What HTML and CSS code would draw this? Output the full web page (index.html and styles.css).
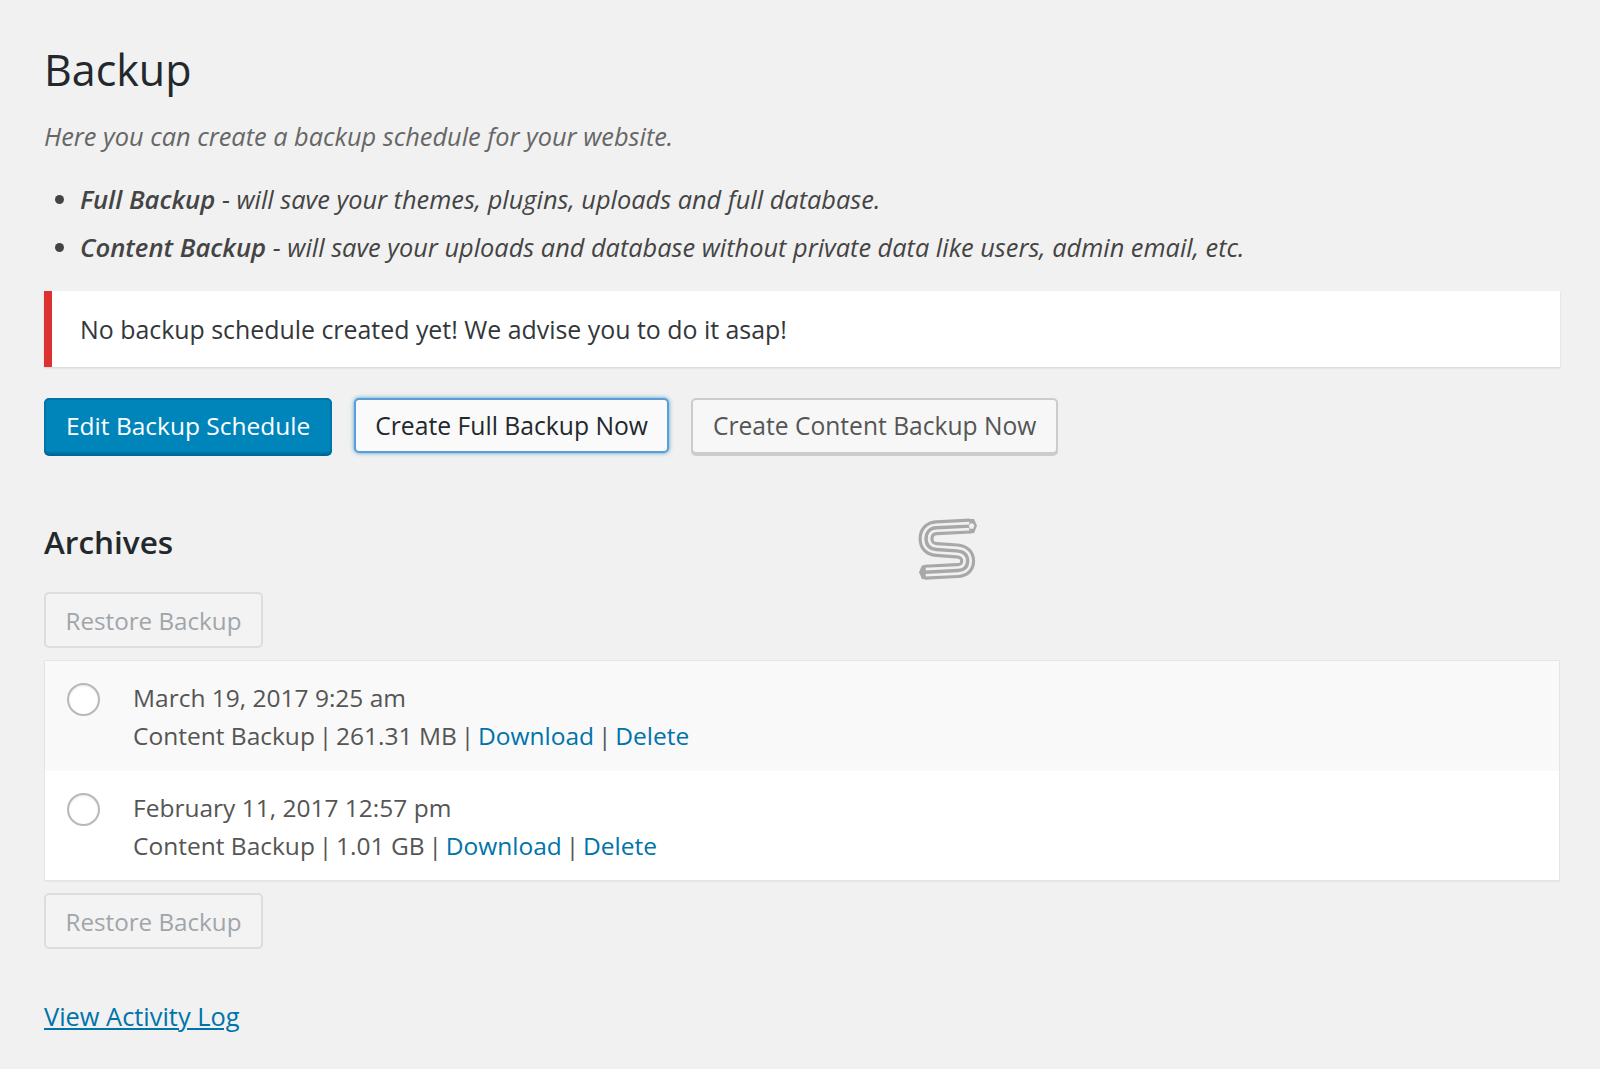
FILE: index.html
```html
<!DOCTYPE html>
<html lang="en">
<head>
<meta charset="utf-8">
<title>Backup</title>
<link rel="stylesheet" href="styles.css">
</head>
<body>
<main class="wrap">
  <h1 class="title">Backup</h1>
  <p class="intro">Here you can create a backup schedule for your website.</p>
  <ul class="types">
    <li><strong>Full Backup</strong> - will save your themes, plugins, uploads and full database.</li>
    <li><strong>Content Backup</strong> - will save your uploads and database without private data like users, admin email, etc.</li>
  </ul>
  <div class="notice">No backup schedule created yet! We advise you to do it asap!</div>
  <div class="actions">
    <a class="btn btn-primary">Edit Backup Schedule</a>
    <a class="btn btn-focus">Create Full Backup Now</a>
    <a class="btn">Create Content Backup Now</a>
  </div>
  <div class="archives-head">
    <h2 class="subtitle">Archives</h2>
    <svg class="logo" viewBox="0 0 60 62" width="58" height="60" aria-hidden="true">
      <path class="logo-band" d="M53 7.300 L18 9 C11 9.300 7.300 14 7.300 20.500 C7.300 27 11 31 18 31.500 L39 33 C46 33.500 50.300 37 50.300 43.500 C50.300 50 46 53 40 53.300 L6 55"/>
      <path class="logo-gap" d="M53 7.300 L18 9 C11 9.300 7.300 14 7.300 20.500 C7.300 27 11 31 18 31.500 L39 33 C46 33.500 50.300 37 50.300 43.500 C50.300 50 46 53 40 53.300 L6 55"/>
      <path class="logo-core" d="M53 7.300 L18 9 C11 9.300 7.300 14 7.300 20.500 C7.300 27 11 31 18 31.500 L39 33 C46 33.500 50.300 37 50.300 43.500 C50.300 50 46 53 40 53.300 L6 55"/>
      <path class="logo-cap" d="M52 0 L57 0 L60 7 L57 14.500 L52 15 Z"/>
      <path class="logo-hole" d="M53 4.500 L56 4.500 L57.300 7.300 L56 10 L53 10 L51.500 7.300 Z"/>
      <path class="logo-cap" d="M3 48 L7 47.500 L7 62.500 L3 62 L0 55 Z"/>
    </svg>
  </div>
  <a class="btn btn-disabled">Restore Backup</a>
  <div class="list">
    <div class="row row-alt">
      <span class="radio"></span>
      <div class="meta">
        <div>March 19, 2017 9:25 am</div>
        <div>Content Backup <span class="sep">|</span> 261.31 MB <span class="sep">|</span> <a class="link">Download</a> <span class="sep">|</span> <a class="link">Delete</a></div>
      </div>
    </div>
    <div class="row">
      <span class="radio"></span>
      <div class="meta">
        <div>February 11, 2017 12:57 pm</div>
        <div>Content Backup <span class="sep">|</span> 1.01 GB <span class="sep">|</span> <a class="link">Download</a> <span class="sep">|</span> <a class="link">Delete</a></div>
      </div>
    </div>
  </div>
  <a class="btn btn-disabled">Restore Backup</a>
  <p class="log"><a class="link underline">View Activity Log</a></p>
</main>
</body>
</html>
```
FILE: styles.css
```css
* { box-sizing: border-box; }
html, body { margin: 0; height: 100%; }
body {
  background: #f1f1f1;
  color: #444;
  font-family: "Open Sans", "Noto Sans", sans-serif;
  font-size: 25px;
  overflow: hidden;
}
.wrap { padding: 40px 40px 0 44px; display: flow-root; }
.title { margin: 0; font-size: 43px; font-weight: 400; line-height: 60px; color: #23282d; }
.intro { margin: 19px 0 0; font-size: 25.350px; font-style: italic; color: #666; line-height: 34px; }
.types { margin: 29px 0 0; padding: 0 0 0 36px; font-size: 25.350px; font-style: italic; }
.types li { line-height: 34px; margin-bottom: 13px; }
.types strong { font-weight: 600; font-size: 25.700px; }
.notice {
  margin-top: 26px; height: 76px; padding: 0 28px; display: flex; align-items: center;
  font-size: 24.900px;
  background: #fff; border-left: 8px solid #dc3232; box-shadow: 0 1px 2px rgba(0,0,0,.12); color: #32373c;
}
.actions { display: flex; gap: 22px; margin-top: 31px; align-items: flex-start; }
.btn {
  display: inline-block; height: 56px; line-height: 52px; padding: 0 20px;
  font-size: 24.600px;
  background: #f7f7f7; border: 2px solid #ccc; border-radius: 5px;
  box-shadow: 0 2px 0 #ccc; color: #555;
}
.btn-primary { font-size: 24.500px; background: #0085ba; border-color: #0073aa; box-shadow: 0 2px 0 #006799; color: #fff; }
.btn-focus { height: 55px; font-size: 24.700px; padding: 0 19px; background: #fafafa; border-color: #5b9dd9; box-shadow: 0 0 4px rgba(30,140,190,.8); color: #23282d; }
.btn-disabled { height: 56px; line-height: 53px; padding: 0 19.500px; font-size: 24.200px; box-shadow: none; border-color: #ddd; color: #a0a5aa; background: #f3f3f3; }
.archives-head { display: flex; align-items: flex-start; height: 138px; padding-top: 68px; position: relative; }
.subtitle { margin: 0; font-size: 31.500px; font-weight: 600; line-height: 40px; color: #23282d; }
.logo { position: absolute; left: 875px; top: 65px; overflow: visible; }
.logo-band, .logo-gap, .logo-core { fill: none; }
.logo-band { stroke: #a8a8a8; stroke-width: 15.500; }
.logo-gap { stroke: #f1f1f1; stroke-width: 9; }
.logo-core { stroke: #a8a8a8; stroke-width: 3.500; }
.logo-cap { fill: #a8a8a8; }
.logo-hole { fill: #f1f1f1; }
.list { margin-top: 12px; background: #fff; border: 1px solid #e5e5e5; box-shadow: 0 1px 1px rgba(0,0,0,.04); margin-bottom: 12px; }
.row { display: flex; height: 109.500px; padding: 18px 0 0 22px; gap: 33px; background: #fff; }
.row-alt { background: #f9f9f9; }
.radio { width: 33px; height: 33px; margin-top: 4px; border: 2px solid #b4b9be; border-radius: 50%; background: #fff; box-shadow: inset 0 1px 2px rgba(0,0,0,.1); flex: none; }
.meta { font-size: 24.500px; line-height: 38px; color: #555; }
.sep { margin: 0 -2.500px; }
.link { color: #0073aa; }
.underline { text-decoration: underline; }
.log { margin: 50px 0 0; font-size: 25.400px; line-height: 34px; }
```
